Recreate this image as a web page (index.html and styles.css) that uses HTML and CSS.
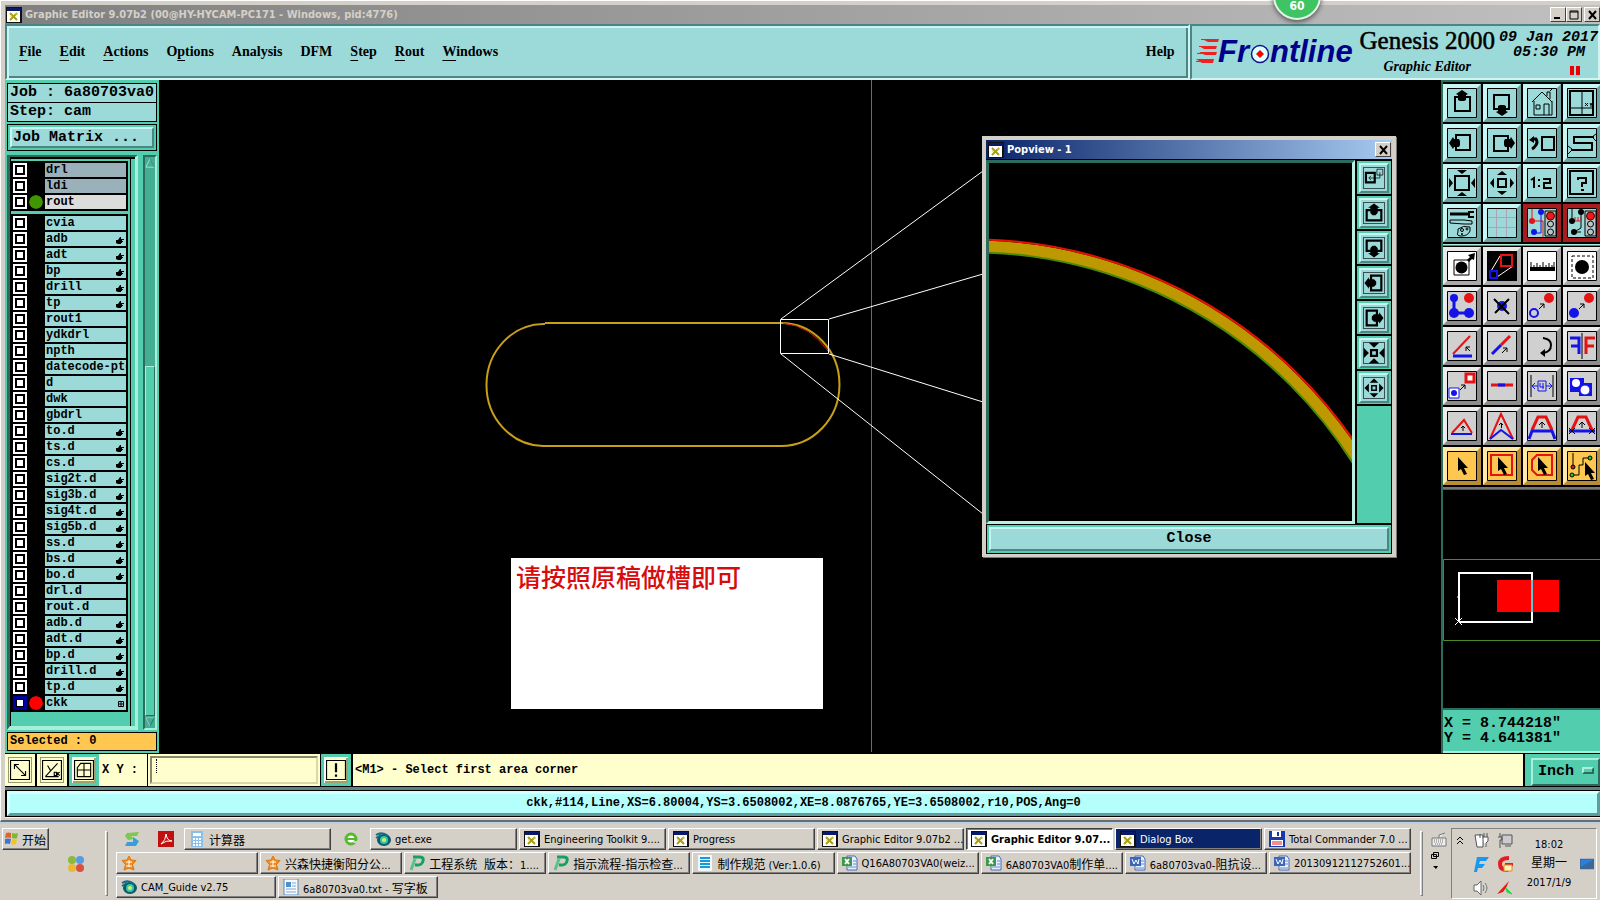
FILE: index.html
```html
<!DOCTYPE html>
<html lang="zh-CN">
<head>
<meta charset="utf-8">
<title>Graphic Editor 9.07b2</title>
<link rel="stylesheet" href="styles.css">
</head>
<body>
<svg class="defs" aria-hidden="true">
  <symbol id="xapp" viewBox="0 0 16 16"><rect width="16" height="16" fill="#111"/><rect x="1" y="1" width="14" height="3" fill="#0a1a6a"/><rect x="1" y="4" width="13" height="11" fill="#fff"/><path d="M4 6l7 7M11 6l-7 7" stroke="#a8a010" stroke-width="2"/><path d="M4 9h2M9 7h3" stroke="#d8d050"/></symbol>
  <symbol id="star" viewBox="0 0 16 16"><path d="M8 1l2 4 5 .5-3.500 4L13 15l-5-2-5 2 1.500-5.500L1 5.500 6 5z" fill="#f58a1c" stroke="#e0780c"/><path d="M5 7h6M8 5v7M5 11h6" stroke="#fff"/></symbol>
  <symbol id="eye" viewBox="0 0 16 16"><ellipse cx="9" cy="9" rx="7" ry="6" fill="#0c5a66"/><circle cx="9" cy="9" r="4" fill="#35c5b0"/><circle cx="9" cy="9" r="2" fill="#d8f060"/><path d="M1 4q6-4 12 1M1 7l5-3" stroke="#156a86" stroke-width="2" fill="none"/></symbol>
  <symbol id="pgreen" viewBox="0 0 16 16"><path d="M4 2h7q4 0 3 4t-5 4H6" fill="none" stroke="#14a060" stroke-width="3"/><path d="M6 4L2 15" stroke="#5abf8e" stroke-width="3"/></symbol>
  <symbol id="lines" viewBox="0 0 16 16"><rect x="1" width="14" height="16" fill="#eef8ff"/><path d="M3 3h10M3 6h10M3 9h10M3 12h10" stroke="#189ad8" stroke-width="2"/></symbol>
  <symbol id="xls" viewBox="0 0 16 16"><path d="M5 1h8l2 3v11H5z" fill="#e8f0ff" stroke="#4a68b0"/><path d="M11 6h3M11 9h3M6 12h8" stroke="#6a88c8"/><rect y="2" width="10" height="9" fill="#3a9a48"/><path d="M3 4l4 5M7 4L3 9" stroke="#fff" stroke-width="2"/></symbol>
  <symbol id="doc" viewBox="0 0 16 16"><path d="M5 1h8l2 3v11H5z" fill="#e8f0ff" stroke="#4a68b0"/><path d="M11 6h3M11 9h3M6 13h8" stroke="#6a88c8"/><rect y="2" width="11" height="9" fill="#3a68b8"/><path d="M2 4l2 5 2-4 2 4 1-5" stroke="#fff" stroke-width="1" fill="none"/></symbol>
</svg>

<div class="window">
  <header class="titlebar">
    <svg class="ico"><use href="#xapp"/></svg>
    <h1>Graphic Editor 9.07b2 (00@HY-HYCAM-PC171 - Windows, pid:4776)</h1>
    <span class="badge">60</span>
    <div class="winbtns">
      <button aria-label="Minimize"><svg viewBox="0 0 12 10"><path d="M2 8h6" stroke="#000" stroke-width="2"/></svg></button>
      <button aria-label="Maximize"><svg viewBox="0 0 12 10"><path d="M2 1h8v8H2zM2 2h8" fill="none" stroke="#000"/></svg></button>
      <button class="gap" aria-label="Close window"><svg viewBox="0 0 12 10"><path d="M3 1l7 8M10 1L3 9" stroke="#000" stroke-width="2"/></svg></button>
    </div>
  </header>

  <div class="top">
    <nav class="menubar">
      <button><u>F</u>ile</button><button><u>E</u>dit</button><button><u>A</u>ctions</button><button>O<u>p</u>tions</button><button>Analysis</button><button>DFM</button><button><u>S</u>tep</button><button><u>R</u>out</button><button><u>W</u>indows</button><button class="help">Help</button>
    </nav>
    <div class="brand">
      <svg class="logo" viewBox="0 0 162 44" role="img" aria-label="Frontline">
        <g fill="#e22"><path d="M6 11h17l-1 3H12zM3 18h18l-1 3H8zM3 24h18l-1 3H9zM0 31h18l-1 4H6z"/></g>
        <g stroke="#e22"><path d="M5 11.500h16M3 18.500h16M1 25.500h16M0 33.500h16"/></g>
        <g class="logotext"><text x="22" y="34">Fr</text><text x="74" y="34">ntline</text></g>
        <circle cx="64" cy="26" r="8.500" fill="#dff" stroke="#14148c" stroke-width="1.500"/>
        <path d="M64 22l4 4-4 4-4-4z" fill="#f00"/>
      </svg>
      <div class="product"><strong>Genesis 2000</strong><em>Graphic Editor</em></div>
      <div class="clock"><span>09 Jan 2017</span><span>05:30 PM</span><i class="pause"></i></div>
    </div>
  </div>

  <main class="work">
    <aside class="left">
      <div class="jobbox"><div>Job : 6a80703va0</div><div>Step: cam</div></div>
      <div class="matrix"><button>Job Matrix ...</button></div>
      <div class="listarea">
        <div class="listframe"><ul class="layers" id="special"></ul><ul class="layers" id="layers"></ul></div>
        <div class="scroll">
          <svg viewBox="0 0 12 12"><path d="M6 1l5 10H1z" fill="#43ae94" stroke="#a9eedb"/><path d="M6 1l5 10" stroke="#256e5c"/></svg>
          <div class="trough"><div class="thumb"></div></div>
          <svg viewBox="0 0 12 12"><path d="M6 11L1 1h10z" fill="#43ae94" stroke="#256e5c"/><path d="M6 11L1 1h10" stroke="#a9eedb" fill="none"/></svg>
        </div>
      </div>
      <div class="selected">Selected : 0</div>
    </aside>

    <section class="canvas">
      <svg class="drawing" width="1282" height="672" viewBox="159 80 1282 672">
        <path d="M871.500 80v672" stroke="#4a8a18"/>
        <path d="M545 323H781a58 61 0 0 1 0 123H543a57.500 61 0 0 1 2-122" fill="none" stroke="#c8a018" stroke-width="2"/>
        <path d="M783 323q28 3 45 28" fill="none" stroke="#e02010"/>
        <g fill="none" stroke="#fff"><path d="M780.500 319.500h48v34h-48z"/><path d="M781 319L983 171M829 319L983 274M829 354L983 402M781 354L983 514"/></g>
      </svg>
      <div class="note">请按照原稿做槽即可</div>
      <section class="popview">
        <header><svg class="ico"><use href="#xapp"/></svg><h2>Popview - 1</h2><button aria-label="Close popview"><svg viewBox="0 0 12 10"><path d="M3 1l7 8M10 1L3 9" stroke="#000" stroke-width="2"/></svg></button></header>
        <div class="popbody">
          <svg class="popdraw" viewBox="0 0 364 358"><g fill="none"><circle cx="-19" cy="543" r="460" stroke="#be9800" stroke-width="12"/><circle cx="-19" cy="543" r="467" stroke="#e81000" stroke-width="2"/><circle cx="-19" cy="543" r="454" stroke="#4c8a08" stroke-width="2"/></g></svg>
          <div class="poptools" id="poptools"></div>
        </div>
        <div class="popclose"><button>Close</button></div>
      </section>
    </section>

    <aside class="right">
      <div class="tools" id="tools1"></div>
      <div class="tools edit" id="tools2"></div>
      <svg class="overview" viewBox="0 0 157 218" preserveAspectRatio="xMinYMin slice">
        <path d="M158 69.500H.5v81H158" fill="none" stroke="#4a8a28"/>
        <rect x="54" y="90" width="62" height="32" fill="#f00"/>
        <path d="M16 132V83h73v49H16" fill="none" stroke="#fff" stroke-width="2"/>
        <path d="M89 90v32" stroke="#5ec8d8" stroke-width="2"/>
        <path d="M12 128l7 7M19 128l-7 7M14 107h2" stroke="#fff"/>
      </svg>
      <div class="coords"><div>X = 8.744218"</div><div>Y = 4.641381"</div></div>
    </aside>
  </main>

  <div class="command">
    <button class="cmd" aria-label="Diagonal"><svg viewBox="0 0 18 18"><path d="M.5.500h17v17H.5zM4 4l10 10M4 8V4h4M10 14h4v-4" fill="none" stroke="#000"/></svg></button>
    <button class="cmd" aria-label="Angle"><svg viewBox="0 0 18 18"><path d="M.5.500h17v17H.5zM3 15L14 3M3 15h12M5 5l3 5M11 11h2v3h-2zM14 11v3M16 11l-2 1 2 2" fill="none" stroke="#000"/></svg></button>
    <button class="cmd on" aria-label="Grid"><svg viewBox="0 0 18 18"><path d="M.5.500h17v17H.5zM6 3h9v12H3V7zM9 3v12M3 9h12" fill="none" stroke="#000"/></svg></button>
    <label for="xy">X Y :</label>
    <div class="xybox"><input id="xy" type="text"><span class="caret"></span></div>
    <button class="cmd on bang" aria-label="Apply"><svg viewBox="0 0 18 18"><path d="M.5.500h17v17H.5z" fill="none" stroke="#000"/><path d="M9 3v8M9 13v2" stroke="#000" stroke-width="2"/></svg></button>
    <output>&lt;M1&gt; - Select first area corner</output>
    <div class="unit"><select aria-label="Units"><option>Inch</option></select><i></i></div>
  </div>
  <div class="status"><div>ckk,#114,Line,XS=6.80004,YS=3.6508002,XE=8.0876765,YE=3.6508002,r10,POS,Ang=0</div></div>
</div>

<footer class="taskbar">
  <div class="startzone">
    <button class="task start"><svg class="ico" viewBox="0 0 16 16"><path d="M2 2q3-1 5 0v5q-3-1-6 0z" fill="#e8602c"/><path d="M8 2q3 1 6 0l-1 5q-2 1-5 0z" fill="#7cb82c"/><path d="M1 8q3-1 6 0l-1 5q-3-1-5 0z" fill="#3a78d0"/><path d="M8 8q3 1 5 0l-1 5q-2 1-5 0z" fill="#f8c020"/></svg><b class="zh">开始</b></button>
    <svg class="ico quad" viewBox="0 0 16 16"><circle cx="4" cy="4" r="4" fill="#8cba3c"/><circle cx="12" cy="4" r="4" fill="#5a9ae0"/><circle cx="4" cy="12" r="4" fill="#e8b838"/><circle cx="12" cy="12" r="4" fill="#d85040"/></svg>
  </div>
  <i class="grip"></i>
  <div class="tasks">
    <div class="taskrow">
      <svg class="ico quick" viewBox="0 0 16 16"><path d="M3 2l12-1-2 4H7l3 3-6 1-3-4z" fill="#7cc850"/><path d="M9 6l6 4-3 5H1l2-4h6z" fill="#38a0d8"/></svg>
      <svg class="ico quick" viewBox="0 0 16 16"><rect width="16" height="16" fill="#c01010"/><path d="M3 13Q8 9 8 3q1 7 6 7-6-1-11 3" fill="none" stroke="#fff"/></svg>
      <button class="task"><svg class="ico" viewBox="0 0 16 16"><rect x="2" width="12" height="16" fill="#8ac0e8"/><rect x="4" y="2" width="8" height="3" fill="#fff"/><path d="M4 8h8M4 11h8M4 14h8" stroke="#fff" stroke-width="2" stroke-dasharray="2 1"/></svg><span><b class="zh">计算器</b></span></button>
      <svg class="ico quick late" viewBox="0 0 16 16"><circle cx="8" cy="8" r="5" fill="#fff" stroke="#58b830" stroke-width="3"/><path d="M4 8h9" stroke="#58b830" stroke-width="2"/><path d="M10 11h5" stroke="#d4d0c8" stroke-width="2"/></svg>
      <button class="task"><svg class="ico"><use href="#eye"/></svg><span>get.exe</span></button>
      <button class="task"><svg class="ico"><use href="#xapp"/></svg><span>Engineering Toolkit 9....</span></button>
      <button class="task"><svg class="ico"><use href="#xapp"/></svg><span>Progress</span></button>
      <button class="task"><svg class="ico"><use href="#xapp"/></svg><span>Graphic Editor 9.07b2 ...</span></button>
      <button class="task active"><svg class="ico"><use href="#xapp"/></svg><span>Graphic Editor 9.07...</span></button>
      <button class="task flash"><svg class="ico"><use href="#xapp"/></svg><span>Dialog Box</span></button>
      <button class="task"><svg class="ico" viewBox="0 0 16 16"><rect width="16" height="16" fill="#1838b0"/><rect x="3" width="9" height="6" fill="#fff"/><rect x="8" y="1" width="2" height="4" fill="#1838b0"/><rect x="2" y="9" width="12" height="6" fill="#fff"/><path d="M3 11h10M3 13h10" stroke="#e02020"/></svg><span>Total Commander 7.0 ...</span></button>
    </div>
    <div class="taskrow">
      <button class="task" aria-label="Favorites"><svg class="ico"><use href="#star"/></svg></button>
      <button class="task"><svg class="ico"><use href="#star"/></svg><span><b class="zh">兴森快捷衡阳分公</b>...</span></button>
      <button class="task"><svg class="ico"><use href="#pgreen"/></svg><span><b class="zh">工程系统&nbsp; 版本：</b>1....</span></button>
      <button class="task"><svg class="ico"><use href="#pgreen"/></svg><span><b class="zh">指示流程-指示检查</b>...</span></button>
      <button class="task"><svg class="ico"><use href="#lines"/></svg><span><b class="zh">制作规范</b> (Ver:1.0.6)</span></button>
      <button class="task"><svg class="ico"><use href="#xls"/></svg><span>Q16A80703VA0(weiz...</span></button>
      <button class="task"><svg class="ico"><use href="#xls"/></svg><span>6A80703VA0<b class="zh">制作单</b>....</span></button>
      <button class="task"><svg class="ico"><use href="#doc"/></svg><span>6a80703va0-<b class="zh">阻抗设</b>...</span></button>
      <button class="task"><svg class="ico"><use href="#doc"/></svg><span>20130912112752601...</span></button>
    </div>
    <div class="taskrow">
      <button class="task wide"><svg class="ico"><use href="#eye"/></svg><span>CAM_Guide v2.75</span></button>
      <button class="task wide"><svg class="ico" viewBox="0 0 16 16"><rect x="1" width="14" height="16" fill="#f4faff" stroke="#5a88b8"/><rect x="3" y="3" width="5" height="5" fill="#4a90d0"/><path d="M9 4h4M9 7h4M3 10h10M3 13h10" stroke="#88a8c8"/></svg><span>6a80703va0.txt - <b class="zh">写字板</b></span></button>
    </div>
  </div>
  <i class="grip"></i>
  <div class="ime">
    <svg width="16" height="16" viewBox="0 0 16 16"><path d="M1 6h14v8H1zM8 6V3l6-2" fill="#eee" stroke="#777"/><path d="M3 8h10M3 10h10M4 12h8" stroke="#777" stroke-dasharray="1 1"/></svg>
    <svg width="8" height="18" viewBox="0 0 8 18"><path d="M2.500.500h5v4h-5zM.5 2.500h5v4h-5z" fill="#d4d0c8" stroke="#000"/><path d="M2 14h5l-2 3z"/></svg>
  </div>
  <div class="tray">
    <svg class="chev" width="6" height="10" viewBox="0 0 6 10"><path d="M0 4l3-3 3 3M0 8l3-3 3 3" fill="none" stroke="#000" stroke-width="1"/></svg>
    <div class="trayicons">
      <svg class="ico" viewBox="0 0 16 16"><path d="M2 3h8v12H4zM7 2v4M11 1v4M14 1v4M9 5h6v4l-2 2v4" fill="#fff" stroke="#555"/></svg>
      <svg class="ico" viewBox="0 0 16 16"><path d="M5 3h10v9H5zM8 14h6M3 1v4M1 5h4v3H3v8" fill="#ccc" stroke="#555"/></svg>
      <svg class="ico" viewBox="0 0 16 16"><path d="M4 1h12l-3 4H7l-1 3h6l-3 4H5l-1 4H1z" fill="#1898f0"/></svg>
      <svg class="ico" viewBox="0 0 16 16"><path d="M12 2Q3 2 3 8t7 6l4-5H8" fill="none" stroke="#e02020" stroke-width="4"/><path d="M7 9h8v6H7z" fill="#fff0c0" stroke="#d89020"/></svg>
      <svg class="ico" viewBox="0 0 16 16"><path d="M1 5h3l4-4v14l-4-4H1z" fill="#fff" stroke="#666"/><path d="M10 5q2 3 0 6M12 3q4 5 0 10" fill="none" stroke="#777"/></svg>
      <svg class="ico" viewBox="0 0 16 16"><path d="M0 14L12 1 9 8l-3 4z" fill="#e81818"/><path d="M9 8l6 6-5-2z" fill="#20d840" stroke="#20d840"/></svg>
    </div>
    <div class="time"><span>18:02</span><b class="zh">星期一</b><span>2017/1/9</span></div>
    <svg class="desk" viewBox="0 0 16 12"><rect width="16" height="12" fill="#3a6898"/><path d="M1 1h14L1 9z" fill="#2a80e0"/></svg>
  </div>
</footer>
<script src="app.js"></script>
</body>
</html>
```

FILE: styles.css
```css
* { box-sizing: border-box; }
:root {
  --aqua: #9bdad9; --aqua-hi: #c8f6f4; --aqua-lo: #4c8684;
  --teal: #52ceae; --teal-hi: #a9eedb; --teal-lo: #2b6c5c;
  --face: #d4d0c8; --cream: #ffffce; --gold: #ffc750;
  --mono: "Liberation Mono", "DejaVu Sans Mono", monospace;
  --ui: "DejaVu Sans Condensed", "Noto Sans CJK SC", sans-serif;
}
body { margin: 0; min-height: 100vh; display: flex; flex-direction: column; background: var(--face); font-family: var(--ui); font-size: 11px; color: #000; overflow: hidden; }
button, input, select { font: inherit; color: inherit; margin: 0; padding: 0; border: 0; border-radius: 0; }
svg { display: block; flex: none; }
.defs { position: absolute; width: 0; height: 0; }
.ico { width: 16px; height: 16px; }
h1, h2 { margin: 0; font-size: 11px; line-height: 16px; font-weight: bold; white-space: nowrap; }

.window { flex: 1; display: flex; flex-direction: column; padding: 4px 0 2px 4px; border-top: 1px solid #fff; border-left: 1px solid #fff; border-bottom: 2px solid #6c6c6c; }
.titlebar { position: relative; height: 19px; flex: none; display: flex; align-items: center; gap: 3px; padding: 0 0 0 1px; background: linear-gradient(90deg, #808080, #c0c0c0); color: var(--face); }
.titlebar .winbtns { margin-left: auto; display: flex; }
.winbtns button, .popview header button { width: 16px; height: 15px; background: var(--face); border: 1px solid; border-color: #fff #404040 #404040 #fff; display: grid; place-items: center; }
.winbtns .gap { margin-left: 2px; }
.winbtns svg, .popview header button svg { width: 12px; height: 10px; }
.badge { position: absolute; left: 79%; top: -33px; width: 48px; height: 48px; margin-left: 8px; border-radius: 50%; background: #3fc463; border: 2px solid #e4f4e8; box-shadow: 0 2px 5px #555; color: #fff; font-weight: bold; font-size: 12px; line-height: 64px; text-align: center; z-index: 2; }

.top { display: flex; height: 56px; flex: none; }
.menubar, .brand { background: var(--aqua); border: 2px solid; border-color: var(--aqua-lo) #d2f5f3 #d2f5f3 var(--aqua-lo); }
.menubar { flex: 1; display: flex; align-items: center; gap: 18px; padding: 0 13px 0 12px; box-shadow: inset 2px 2px var(--aqua-hi), inset -2px -2px var(--aqua-lo); font: bold 14px/20px "Liberation Serif", serif; }
.menubar button { background: none; }
.menubar u { text-underline-offset: 4px; }
.menubar .help { margin-left: auto; }
.brand { flex: 0 0 409px; display: flex; align-items: flex-start; padding: 0 0 0 4px; }
.logo { width: 162px; height: 44px; margin: 2px 2px 0 0; }
.logotext { font: italic bold 31px "Liberation Sans", sans-serif; fill: #00008c; }
.product { display: flex; flex-direction: column; align-items: center; padding-top: 1px; font-family: "Liberation Serif", serif; white-space: nowrap; }
.product strong { font-size: 25px; line-height: 28px; font-weight: normal; -webkit-text-stroke: thin #000; }
.product em { font-size: 14px; line-height: 24px; font-weight: bold; }
.clock { margin-left: 4px; padding-top: 4px; font: italic bold 15px/15px var(--mono); display: flex; flex-direction: column; white-space: nowrap; }
.clock span + span { padding-left: 14px; }
.pause { width: 10px; height: 9px; margin: 6px 0 0 71px; border: solid #e00; border-width: 0 4px; }

.work { flex: 1; display: flex; min-height: 0; background: #000; }
.left { width: 154px; flex: none; background: var(--teal); padding: 3px 2px 2px; display: flex; flex-direction: column; gap: 2px; font: bold 15px/18px var(--mono); }
.jobbox { border: 1px solid #000; background: var(--aqua); white-space: nowrap; }
.jobbox div { padding-left: 2px; overflow: hidden; }
.jobbox div + div { border-top: 1px solid #000; }
.matrix { border: 1px solid #000; background: var(--teal); padding: 2px; }
.matrix button { display: block; width: 100%; text-align: left; background: var(--aqua); border: 2px solid; border-color: var(--aqua-hi) var(--aqua-lo) var(--aqua-lo) var(--aqua-hi); padding-left: 1px; line-height: 17px; }
.listarea { flex: 1; display: flex; gap: 5px; min-height: 0; margin-top: 2px; }
.listframe { flex: 1; border: solid; border-width: 2px 3px 4px 3px; border-color: #256e5c var(--teal-hi) var(--teal-hi) var(--teal-lo); box-shadow: inset 1px 2px #000, inset -4px 0 var(--teal), inset -5px 0 #000; padding: 4px 7px 0 1px; overflow: hidden; }
.layers { list-style: none; margin: 0 0 3px; padding: 0; background: #000; border: 2px solid #000; border-width: 2px 2px 0; font: bold 12px/14px var(--mono); }
.layers li { display: grid; grid-template-columns: 14px 18px 1fr; height: 16px; border-bottom: 2px solid #000; }
.layers input { appearance: none; width: 14px; height: 14px; background: #fff; box-shadow: inset 0 0 0 2px #fff, inset 0 0 0 4px #000; }
.layers input.cur { box-shadow: inset 0 0 0 3px #00009c, inset 0 0 0 4px #000; }
.dot { width: 14px; height: 14px; margin-left: 2px; border-radius: 50%; }
.layers label { background: var(--aqua); padding-left: 1px; display: flex; overflow: hidden; white-space: nowrap; align-items: center; }
.layers label svg { margin: 2px 2px 0 auto; }
.layers .slate { background: #9ab1bc; }
.layers .pale { background: #dcdcdc; }
.scroll { width: 14px; display: flex; flex-direction: column; align-items: center; background: #43ae94; border: 2px solid; border-color: var(--teal-lo) var(--teal-hi) var(--teal-hi) var(--teal-lo); }
.scroll svg { width: 10px; height: 12px; }
.trough { flex: 1; width: 100%; display: flex; flex-direction: column; justify-content: flex-end; }
.thumb { height: 64%; background: var(--teal); border: 1px solid; border-color: var(--teal-hi) var(--teal-lo) var(--teal-lo) var(--teal-hi); }
.selected { border: 1px solid #000; background: var(--gold); font-size: 12px; line-height: 17px; padding-left: 2px; }

.canvas { flex: 1; position: relative; overflow: hidden; background: #000; }
.drawing { position: absolute; left: 0; top: 0; }
.note { position: absolute; left: 352px; top: 478px; width: 312px; height: 151px; background: #fff; color: #d80c0c; font: 500 25px/36px "Noto Sans CJK SC", sans-serif; padding-left: 5px; }
.popview { position: absolute; left: 823px; top: 56px; width: 414px; background: #000; border: 4px solid var(--face); border-bottom-width: 3px; box-shadow: 1px 1px #777; }
.popview header { height: 19px; display: flex; align-items: center; gap: 3px; padding: 0 1px 0 2px; color: #fff; background: linear-gradient(90deg, #0a246a, #a6caf0); }
.popview header button { margin-left: auto; }
.popbody { display: flex; gap: 1px; margin-top: 1px; }
.popdraw { flex: 1; min-width: 0; height: 364px; background: #000; border: 3px solid; border-color: var(--teal-lo) #b8f0e2 #b8f0e2 var(--teal-lo); }
.poptools { width: 36px; background: var(--teal); border: 1px solid #000; }
.poptools button { display: block; width: 34px; height: 35px; padding: 2px; background: var(--teal); border-bottom: 2px solid #000; }
.poptools svg { width: 30px; height: 30px; padding: 2px; background: var(--aqua); border: 2px solid; border-color: var(--aqua-hi) var(--aqua-lo) var(--aqua-lo) var(--aqua-hi); }
.popclose { margin: 1px; padding: 2px; background: var(--teal); }
.popclose button { display: block; width: 100%; height: 24px; background: var(--aqua); border: 2px solid; border-color: var(--aqua-hi) var(--aqua-lo) var(--aqua-lo) var(--aqua-hi); font: bold 15px/18px var(--mono); }

.right { width: 159px; flex: none; display: flex; flex-direction: column; border-left: 2px solid var(--teal-lo); overflow: hidden; }
.tools { display: grid; grid-template-columns: repeat(4, 38px); gap: 2px; padding: 2px 0; border-top: 2px solid var(--teal-lo); border-bottom: 1px solid var(--teal-hi); background: #000; }
.edit { padding-top: 1px; border-top: 1px solid #777; border-bottom: 2px solid #777; }
.tools button { width: 38px; height: 38px; background: var(--aqua); border: 4px solid; border-color: var(--aqua-hi) #6aa3a2 #6aa3a2 var(--aqua-hi); }
.tools svg { width: 30px; height: 30px; }
.tools .red { border-color: #a81c20; }
.tools .white { background: #fff; border-color: #e8e8e8 #aaa #aaa #e8e8e8; }
.tools .grey { background: #d0d0d0; border-color: #ececec #8c8c8c #8c8c8c #ececec; }
.tools .amber { background: var(--gold); border-color: #ffe9a8 #b98d34 #b98d34 #ffe9a8; }
.overview { width: 100%; flex: 1; min-height: 0; border-top: 1px solid var(--teal-lo); }
.coords { height: 45px; background: var(--teal); border: solid; border-width: 2px 0; border-color: var(--teal-lo) transparent var(--teal-hi); padding: 6px 0 0 1px; font: bold 15px/15px var(--mono); white-space: pre; }

.command { display: flex; height: 34px; flex: none; padding: 1px 0; background: #000; font: bold 12px/32px var(--mono); }
.cmd { width: 30px; margin-right: 2px; background: var(--cream); border: 3px solid var(--cream); padding: 2px; box-shadow: inset 0 0 0 1px #999970; display: grid; place-items: center; }
.cmd.on { border-color: var(--teal); margin-right: 0; box-shadow: inset 1px 1px #fff, inset -2px -2px #a0a070; }
.cmd svg { width: 20px; height: 20px; }
.command label { width: 48px; background: var(--cream); padding-left: 3px; white-space: pre; }
.xybox { position: relative; width: 172px; margin-left: 1px; background: var(--cream); padding: 2px; }
.xybox input { display: block; width: 100%; height: 28px; background: var(--cream); border: 2px solid; border-color: #88886a #d8d8aa #d8d8aa #88886a; }
.caret { position: absolute; left: 8px; top: 5px; height: 14px; border-left: 1px dotted #000; }
.bang { margin-left: 1px; }
.command output { flex: 1; background: var(--cream); margin-left: 2px; padding-left: 2px; }
.unit { position: relative; width: 75px; margin-left: 2px; background: var(--teal); padding: 2px 0 2px 6px; }
.unit select { appearance: none; width: 100%; height: 28px; background: var(--teal); border: 2px solid; border-color: var(--teal-hi) var(--teal-lo) var(--teal-lo) var(--teal-hi); padding-left: 5px; font: bold 15px/20px var(--mono); }
.unit i { position: absolute; right: 6px; top: 13px; width: 12px; height: 7px; border: 2px solid; border-color: var(--teal-hi) var(--teal-lo) var(--teal-lo) var(--teal-hi); pointer-events: none; }
.status { flex: none; background: #000; border-top: 3px solid #5f8180; border-bottom: 1px solid #d8ffff; padding: 1px 0 1px 2px; }
.status div { background: #b4fefc; border: 3px solid; border-color: #d8ffff #5f9c9c #5f9c9c #d8ffff; font: bold 12px/19px var(--mono); text-align: center; }

.taskbar { flex: none; display: flex; border-top: 2px solid #b8d0e8; padding: 4px 3px 2px 2px; height: 79px; }
.startzone { width: 103px; display: flex; flex-direction: column; gap: 4px; }
.quad { margin: 2px 0 0 66px; }
.grip { width: 3px; margin: 3px 0; border: 1px solid; border-color: #fff #808080 #808080 #fff; flex: none; }
.tasks { flex: 1; min-width: 0; display: flex; flex-direction: column; gap: 2px; padding: 0 9px 0 8px; }
.taskrow { display: flex; gap: 2px; align-items: center; }
.quick { margin: 0 8px; }
.late { margin: 0 9px 0 10px; }
.task { flex: 1 1 0; height: 22px; display: flex; align-items: center; gap: 4px; padding: 0 2px 0 4px; min-width: 0; overflow: hidden; white-space: nowrap; background: var(--face); border: 1px solid; border-color: #fff #404040 #404040 #fff; box-shadow: inset -1px -1px #808080; text-align: left; }
.wide { flex: 0 0 160px; }
.start { flex: none; width: 47px; padding: 0 0 0 1px; gap: 2px; }
.active { background: #fff; border-color: #404040 #fff #fff #404040; box-shadow: inset 1px 1px #808080; font-weight: bold; }
.flash { background: #0a246a; color: #fff; }
.zh { font-size: 12px; font-weight: normal; }
.ime { width: 28px; display: flex; flex-direction: column; gap: 4px; padding: 4px 0 0 8px; }
.tray { width: 146px; display: flex; align-items: center; border: 1px solid; border-color: #808080 #fff #fff #808080; padding-left: 5px; }
.chev { align-self: flex-start; margin-top: 7px; }
.trayicons { display: grid; grid-template-columns: 16px 16px; gap: 8px; margin-left: 10px; }
.time { width: 56px; margin: 0 3px 0 8px; text-align: center; display: flex; flex-direction: column; line-height: 19px; }
.desk { width: 14px; height: 12px; }
```

FILE: app.js
```js
const hand = '<svg width="8" height="7" viewBox="0 0 8 7"><path d="M0 3h2l2-3h1v2h3v1H6v1h1v1H6v1H5v1H2L0 6z"/></svg>';
const grid = '<svg width="6" height="6" viewBox="0 0 6 6"><path d="M.5.500h5v5h-5zM3 0v6M0 3h6" fill="none" stroke="#000"/></svg>';

function row([name, mark = '', tone = '', dot = '']) {
  const cur = name === 'ckk' ? 'cur' : '';
  const icon = mark === 'h' ? hand : mark === 'g' ? grid : '';
  return `<li><input type="checkbox" class="${cur}" id="l-${name}"><span>${dot ? `<svg class="dot" viewBox="0 0 14 14"><circle cx="7" cy="7" r="7" fill="${dot}"/></svg>` : ''}</span><label class="${tone}" for="l-${name}">${name}${icon}</label></li>`;
}
const special = [['drl', '', 'slate'], ['ldi', '', 'slate'], ['rout', '', 'pale', '#409600']];
const layers = [['cvia'], ['adb', 'h'], ['adt', 'h'], ['bp', 'h'], ['drill', 'h'], ['tp', 'h'], ['rout1'], ['ydkdrl'], ['npth'],
  ['datecode-pte'], ['d'], ['dwk'], ['gbdrl'], ['to.d', 'h'], ['ts.d', 'h'], ['cs.d', 'h'], ['sig2t.d', 'h'], ['sig3b.d', 'h'],
  ['sig4t.d', 'h'], ['sig5b.d', 'h'], ['ss.d', 'h'], ['bs.d', 'h'], ['bo.d', 'h'], ['drl.d'], ['rout.d'], ['adb.d', 'h'],
  ['adt.d', 'h'], ['bp.d', 'h'], ['drill.d', 'h'], ['tp.d', 'h'], ['ckk', 'g', '', '#f00']];
document.getElementById('special').innerHTML = special.map(row).join('');
document.getElementById('layers').innerHTML = layers.map(row).join('');

const K = 'fill="none" stroke="#000"', R = 'fill="none" stroke="#e41414"', B = 'fill="none" stroke="#1414e8"';
const pointer = '<path d="M11 6v14l3-2 3 6 3-1-3-6h4z"/>';
const up = '<path d="M15 2l6 4-2 1v5l-2 1h-4l-2-1V7L9 6z"/>';
const spin = (a, s) => `<g transform="rotate(${a} 15 15)">${s}</g>`;
const four = s => [0, 90, 180, 270].map(a => spin(a, s)).join('');
const arrow = `<path d="M0 6L5 1M1 1h4v4" ${K}/>`;
const at = (x, y, s) => `<g transform="translate(${x} ${y})">${s}</g>`;
const house = `<path d="M5 14L15 4l10 10M7 13v14h18V13M17 27V16h5v11M9 17h4v4H9z" ${K}/><path d="M20 8V4h3v7M23 3l2-2" ${K}/>`;
const light = c => `<path d="M18 3h11v25H18z" fill="#b8c8c8" stroke="#000"/><circle cx="23.500" cy="8" r="4" fill="${c}" stroke="#400"/><circle cx="23.500" cy="16" r="3" ${K}/><circle cx="23.500" cy="24" r="3" ${K}/>`;

const view = [
  `<path d="M8 9h15v14H8z" ${K} stroke-width="2"/>${up}`,
  spin(180, `<path d="M8 9h15v14H8z" ${K} stroke-width="2"/>${up}`),
  house,
  `<path d="M3 3h23v24H3z" ${K} stroke-width="2"/><path d="M15 3v24M3 20h23" ${K}/><path d="M18 15l3 3M21 15l-3 3M23 15l1 2 1-2M24 16v3" ${K}/>`,
  spin(-90, `<path d="M8 9h15v14H8z" ${K} stroke-width="2"/>${up}`),
  spin(90, `<path d="M8 9h15v14H8z" ${K} stroke-width="2"/>${up}`),
  `<path d="M15 9h12v13H15z" ${K} stroke-width="2"/><path d="M5 11h4q2 3 0 6t-4 4" ${K} stroke-width="3"/><path d="M2 12l5-4v7z"/>`,
  `<path d="M27 9H7v6h18v7H4" ${K} stroke-width="2"/><path d="M25 9l4-3M26 10l3 3M5 21l-4-3M5 22l-4 4" ${K}/>`,
  `<path d="M8 8h14v14H8z" ${K} stroke-width="2"/>${four('<path d="M15 6l-5-4h10z"/>')}`,
  `<path d="M11 11h8v8h-8z" ${K} stroke-width="2"/>${four('<path d="M15 3l5 4H10z"/>')}`,
  `<path d="M4 12l3-2v10M11 12h2M11 18h2M16 11h7v4h-6v5h8" ${K} stroke-width="2"/>`,
  `<path d="M3 3h23v23H3z" ${K} stroke-width="2"/><path d="M11 12v-2h8v5h-4v4M14 22h3" ${K} stroke-width="2"/>`,
  `<path d="M3 6h18" ${K} stroke-width="3"/><path d="M27 4h-5v5h5" ${K} stroke-width="2"/><path d="M3 12h14l8 1v3h-8l-14-1z" ${K}/><path d="M11 21q5-4 12-2v4q-2 5-9 5-5 0-3-4z" ${K}/><circle cx="15" cy="22" r="1.500" ${K}/><circle cx="20" cy="21" r="1" ${K}/><circle cx="15" cy="26" r="1"/>`,
  `<path d="M9.500 1v28M19.500 1v28M1 9.500h28M1 19.500h28" stroke="#b0a0b8"/>`,
  `<path d="M5 1v12h11v16" ${R}/><path d="M14 5v20H7" ${B}/><circle cx="5" cy="13" r="3" fill="#e41414"/><circle cx="14" cy="4" r="3" fill="#1414e8"/><circle cx="7" cy="24" r="3" fill="#1414e8"/>${light('#f01818')}`,
  `<path d="M5 1v12M14 4v16l-7 4M7 24h7" ${K}/><path d="M7 13h6M8 13V9M11 13V9M14 13V9" ${R}/><circle cx="5" cy="13" r="3"/><circle cx="14" cy="4" r="3"/><circle cx="7" cy="24" r="3"/>${light('#f01818')}`
];
const edit = [
  ['white', `<path d="M7 9h15v15H7z" ${K}/><circle cx="14.500" cy="16.500" r="6"/><path d="M20 9l3-3-2-2 7-2-1 7-2-1-3 3z"/>`],
  ['white', `<path d="M0 0h30v30H0z"/><path d="M4 20L13 5M10 26l16-11" stroke="#fff"/><path d="M14 4h11v11H14z" ${R} stroke-width="2"/><path d="M3 20h7v7H3z" ${B} stroke-width="2"/>`],
  ['white', `<path d="M3 16h25v4H3z"/><path d="M4 11v6M7 14v3M10 12v5M13 14v3M16 11v6M19 14v3M22 12v5M25 14v3M27 11v6" ${K}/>`],
  ['white', `<path d="M5 5h21v22H5z" ${K} stroke-dasharray="3 2"/><circle cx="15" cy="16" r="7"/>`],
  ['grey', `<path d="M7 7v15h15" ${B} stroke-width="3"/><g fill="#1414e8"><circle cx="7" cy="7" r="4"/><circle cx="7" cy="22" r="5"/><circle cx="22" cy="22" r="5"/></g><circle cx="22" cy="7" r="5" fill="#e41414"/>`],
  ['grey', `<circle cx="15" cy="15" r="5" fill="#1414e8"/><path d="M7 8l15 15M22 8L8 22" ${K} stroke-width="2"/>`],
  ['grey', `<circle cx="7" cy="22" r="4" ${B} stroke-width="2"/><circle cx="22" cy="7" r="5" fill="#e41414"/>${at(12, 12, arrow)}`],
  ['grey', `<circle cx="7" cy="22" r="5" fill="#1414e8"/><circle cx="22" cy="7" r="5" fill="#e41414"/>${at(12, 12, arrow)}`],
  ['grey', `<path d="M6 23L23 5" ${R} stroke-width="2"/><path d="M6 25h19" ${B} stroke-width="3"/><path d="M23 20l-4-4M19 20v-4h4" ${K}/>`],
  ['grey', `<path d="M14 14l9-9" ${R} stroke-width="3"/><path d="M5 23l9-9" ${B} stroke-width="3"/>${at(15, 16, arrow)}`],
  ['grey', `<path d="M16 7q8 1 8 7 0 7-8 8" ${K} stroke-width="2"/><path d="M13 22l5-4v8z"/>`],
  ['grey', `<path d="M15 2v26" ${K}/><path d="M3 7h9v16M4 15h8" ${B} stroke-width="3"/><path d="M28 7h-9v16M27 15h-8" ${R} stroke-width="3"/>`],
  ['grey', `<path d="M19 3h8v8h-8z" fill="#fff" stroke="#e41414" stroke-width="3"/><path d="M2 17h10v10H2z" fill="#fff" stroke="#1414e8"/><circle cx="7" cy="22" r="3" fill="#1414e8"/>${at(13, 13, arrow)}`],
  ['grey', `<path d="M4 14h22" ${R} stroke-width="3"/><path d="M11 14h7" ${B} stroke-width="3"/>`],
  ['grey', `<path d="M4 4v22M26 4v22" ${K}/><path d="M5 15h6M8 12l-3 3 3 3M19 15h6M22 12l3 3-3 3M11 10h8v10h-8zM13 12v4h4M16 12v6" ${B}/>`],
  ['grey', `<path d="M3 7h14v14H3zM12 12h13v13H12z" fill="#1414e8"/><circle cx="9" cy="12" r="4" fill="#fff"/><circle cx="18" cy="19" r="5" fill="#fff" stroke="#1414e8"/>`],
  ['grey', `<path d="M5 22L17 9l8 13" ${R} stroke-width="2"/><path d="M4 23h21" ${B} stroke-width="2"/><path d="M16 20v-5M14 17l2-2 2 2" ${K}/>`],
  ['grey', `<path d="M3 28L14 3l12 25" ${R} stroke-width="2"/><path d="M3 28l11-9 12 9" ${B} stroke-width="2"/><path d="M14.500 17v-5M12 14l2-2 2 2" ${K}/>`],
  ['grey', `<path d="M5 19L11 6h8l6 13" ${R} stroke-width="3"/><path d="M2 28l3-8h20l3 8" ${B} stroke-width="3"/><path d="M15 17v-6M12 14l3-3 3 3" ${K}/>`],
  ['grey', `<path d="M5 19L11 6h8l6 13" ${R} stroke-width="3"/><path d="M2 20h26" ${B} stroke-width="3"/><path d="M15 17v-6M12 14l3-3 3 3M2 17l6 6M8 17l-6 6M22 17l6 6M28 17l-6 6" ${K}/>`],
  ['amber', pointer],
  ['amber', `<path d="M4 4h21v20H4z" ${R} stroke-width="2"/>${pointer}`],
  ['amber', `<path d="M10 4h15v20H10l-5-5V9z" ${R} stroke-width="2"/>${pointer}`],
  ['amber', `<path d="M6 2v12M5 24h7V14h4V7h7" ${K}/><g stroke="#000"><circle cx="6" cy="16" r="2" fill="#c22"/><circle cx="5" cy="24" r="2" fill="#2c2"/><circle cx="23" cy="7" r="2" fill="#2c2"/></g>${at(7, 5, pointer)}`]
];
const frame = `<path d="M.5.500h29v29H.5z" ${K}/>`;
const icon = body => `<svg viewBox="0 0 30 30">${frame}${body}</svg>`;
document.getElementById('tools1').innerHTML = view.map((v, i) => `<button class="${i > 13 ? 'red' : ''}">${icon(v)}</button>`).join('');
document.getElementById('tools2').innerHTML = edit.map(([c, v]) => `<button class="${c}">${icon(v)}</button>`).join('');

const box = `<path d="M5 11h20v14H5z" ${K} stroke-width="3"/><path d="M15 2l8 6h-3v7l-3 3h-4l-3-3V8H7z"/>`;
const pop = [
  `<path d="M4 8h12v13H4z" ${K} stroke-width="3"/><path d="M19 3h8v8h-8zM8 15h15V7M11 12l-3 3 3 3" ${K}/>`,
  box, spin(180, box), spin(-90, box), spin(90, box),
  `<path d="M11 11h8v8h-8z" ${K} stroke-width="3"/>${four('<path d="M15 8L8 1h14z"/>')}`,
  `<path d="M12 12h6v6h-6z" ${K} stroke-width="2"/>${four('<path d="M15 2l6 6H9z"/>')}`
];
document.getElementById('poptools').innerHTML = pop.map(v => `<button>${icon(v)}</button>`).join('');
```
